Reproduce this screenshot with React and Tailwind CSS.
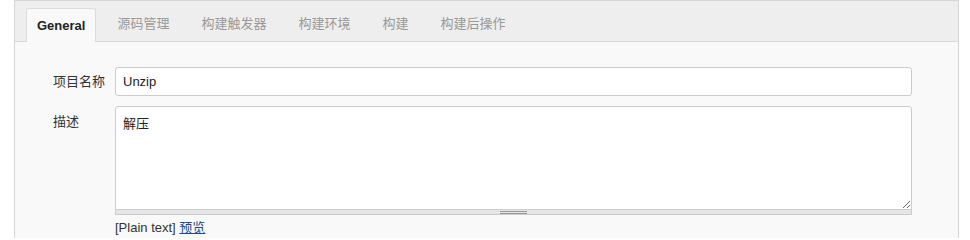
import React from 'react';

const tabs = ['源码管理', '构建触发器', '构建环境', '构建', '构建后操作'];

const App = () => {
    return (
        <div
            className="w-[970px] h-[238px] bg-white pl-[14px] pr-[11px] overflow-hidden"
            style={{ fontFamily: '"Liberation Sans", Arial, "Noto Sans CJK SC", sans-serif' }}
        >
            <div className="h-[260px] border border-[#d6d6d6] bg-[#f9f9f9]">
                <div className="h-[41px] bg-[#eeeeee] border-b border-[#d9d9d9] flex items-end pl-[11px]">
                    <div className="h-[34px] px-[10px] mr-[10px] flex items-center bg-[#f9f9f9] border border-b-0 border-[#dcdcdc] rounded-t-[3px] -mb-px text-[13px] font-bold text-[#222]">
                        General
                    </div>
                    {tabs.map((t) => (
                        <div key={t} className="h-[34px] px-[11px] mr-[10px] flex items-center text-[13px] text-[#999]">
                            {t}
                        </div>
                    ))}
                </div>
                <div className="pt-[25px]">
                    <div className="flex items-center">
                        <div className="w-[100px] pl-[38px] text-[13px] text-[#333]">项目名称</div>
                        <input
                            className="w-[797px] h-[29px] px-[7px] bg-white border border-[#cccccc] rounded-[3px] text-[13px] text-[#222] outline-none"
                            defaultValue="Unzip"
                        />
                    </div>
                    <div className="flex mt-[10px]">
                        <div className="w-[100px] pl-[38px] pt-[6px] text-[13px] text-[#333]">描述</div>
                        <div className="w-[797px]">
                            <textarea
                                className="block w-full h-[104px] px-[7px] py-[7px] bg-white border border-[#cccccc] rounded-t-[3px] text-[13px] text-[#222] outline-none resize-y"
                                defaultValue="解压"
                            />
                            <div className="h-[5px] bg-[#e6e6e6] border border-t-0 border-[#cccccc] flex justify-center items-center">
                                <div className="w-[27px] h-[3px] border-y border-[#999]" />
                            </div>
                            <div className="mt-[3px] text-[13px] text-[#333]">
                                [Plain text]{' '}
                                <a href="#" className="text-[#204a87] underline">预览</a>
                            </div>
                        </div>
                    </div>
                </div>
            </div>
        </div>
    );
};

export default App;
